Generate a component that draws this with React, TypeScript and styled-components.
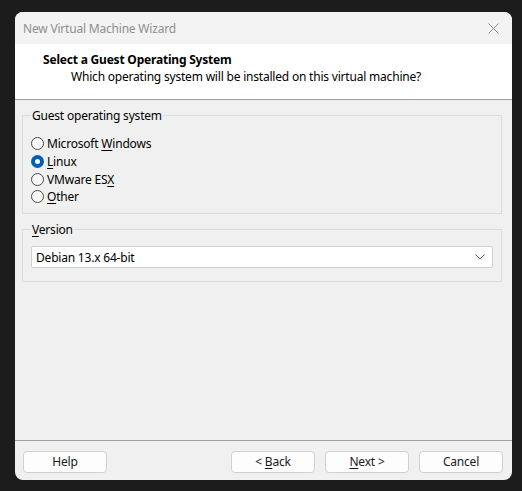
import { createGlobalStyle } from "styled-components";
import styled from "styled-components";

const GlobalStyle = createGlobalStyle`
  html, body {
    margin: 0;
    padding: 0;
    background: #1c1c1c;
  }
  body {
    font-family: "Noto Sans", "Liberation Sans", sans-serif;
    font-size: 12px;
    letter-spacing: -0.2px;
    color: #000;
  }
`;

const Page = styled.div`
  width: 522px;
  height: 491px;
  padding: 12px 10px 11px 15px;
  box-sizing: border-box;
`;

const Window = styled.div`
  height: 100%;
  display: flex;
  flex-direction: column;
  background: #f0f0f0;
  border-radius: 8px;
  overflow: hidden;
`;

const TitleBar = styled.div`
  height: 32px;
  flex: none;
  display: flex;
  align-items: center;
  justify-content: space-between;
  padding: 0 12px 0 8px;
  background: #f3f3f3;
  color: #8f8f8f;
`;

const CloseButton = styled.div`
  width: 14px;
  height: 14px;
  display: flex;
  align-items: center;
  justify-content: center;
`;

const Header = styled.div`
  height: 56px;
  flex: none;
  background: #fff;
  border-bottom: 1px solid #a0a0a0;
  padding: 7px 0 0 28px;
  box-sizing: border-box;
`;

const HeaderTitle = styled.div`
  font-weight: bold;
  line-height: 17px;
`;

const HeaderText = styled.div`
  padding-left: 28px;
  line-height: 17px;
`;

const Body = styled.div`
  flex: 1;
  padding: 8px 10px 0 7px;
  display: flex;
  flex-direction: column;
  gap: 8px;
`;

const Group = styled.fieldset<{ $height: number }>`
  margin: 0;
  height: ${(p) => p.$height}px;
  box-sizing: border-box;
  border: 1px solid #dcdcdc;
  border-radius: 0;
  padding: 3px 8px 0 8px;
`;

const Legend = styled.legend`
  padding: 0 1px;
  margin-left: 0;
  line-height: 15px;
`;

const RadioList = styled.div`
  display: flex;
  flex-direction: column;
  margin-top: 9px;
`;

const RadioRow = styled.label`
  height: 17.7px;
  display: flex;
  align-items: center;
  gap: 3px;
`;

const RadioDot = styled.span<{ $checked?: boolean }>`
  width: 13px;
  height: 13px;
  box-sizing: border-box;
  border-radius: 50%;
  flex: none;
  border: ${(p) => (p.$checked ? "4px solid #005fb8" : "1px solid #4a4a4a")};
  background: ${(p) => (p.$checked ? "#fff" : "#f7f7f7")};
`;

const Key = styled.span`
  text-decoration: underline;
  text-underline-offset: 2px;
`;

const Select = styled.div`
  margin-top: 6px;
  height: 22px;
  box-sizing: border-box;
  background: #fff;
  border: 1px solid #d0d0d0;
  border-radius: 2px;
  display: flex;
  align-items: center;
  justify-content: space-between;
  padding: 0 7px 0 4px;
`;

const Footer = styled.div`
  height: 40px;
  box-sizing: border-box;
  flex: none;
  border-top: 1px solid #a0a0a0;
  display: flex;
  align-items: center;
  padding: 0 9px 0 8px;
  gap: 10px;
`;

const Spacer = styled.div`
  flex: 1;
`;

const Button = styled.button`
  width: 84px;
  height: 22px;
  margin-top: 2px;
  box-sizing: border-box;
  background: #fdfdfd;
  border: 1px solid #d0d0d0;
  border-radius: 4px;
  font-family: inherit;
  font-size: 12px;
  letter-spacing: inherit;
  color: #1a1a1a;
  padding: 0;
`;

const radios = [
  { label: <>Microsoft <Key>W</Key>indows</>, checked: false },
  { label: <><Key>L</Key>inux</>, checked: true },
  { label: <>VMware ES<Key>X</Key></>, checked: false },
  { label: <><Key>O</Key>ther</>, checked: false },
];

export default function App() {
  return (
    <Page>
      <GlobalStyle />
      <Window>
        <TitleBar>
          <span>New Virtual Machine Wizard</span>
          <CloseButton>
            <svg width="11" height="11" viewBox="0 0 11 11">
              <path d="M0.5 0.5 L10.5 10.5 M10.5 0.5 L0.5 10.5" stroke="#8a8a8a" strokeWidth="1" />
            </svg>
          </CloseButton>
        </TitleBar>
        <Header>
          <HeaderTitle>Select a Guest Operating System</HeaderTitle>
          <HeaderText>Which operating system will be installed on this virtual machine?</HeaderText>
        </Header>
        <Body>
          <Group $height={106}>
            <Legend>Guest operating system</Legend>
            <RadioList>
              {radios.map((r, i) => (
                <RadioRow key={i}>
                  <RadioDot $checked={r.checked} />
                  <span>{r.label}</span>
                </RadioRow>
              ))}
            </RadioList>
          </Group>
          <Group $height={60}>
            <Legend><Key>V</Key>ersion</Legend>
            <Select>
              <span>Debian 13.x 64-bit</span>
              <svg width="10" height="6" viewBox="0 0 10 6">
                <path d="M0.5 0.5 L5 5 L9.5 0.5" fill="none" stroke="#606060" strokeWidth="1" />
              </svg>
            </Select>
          </Group>
        </Body>
        <Footer>
          <Button>Help</Button>
          <Spacer />
          <Button>&lt; <Key>B</Key>ack</Button>
          <Button><Key>N</Key>ext &gt;</Button>
          <Button>Cancel</Button>
        </Footer>
      </Window>
    </Page>
  );
}
